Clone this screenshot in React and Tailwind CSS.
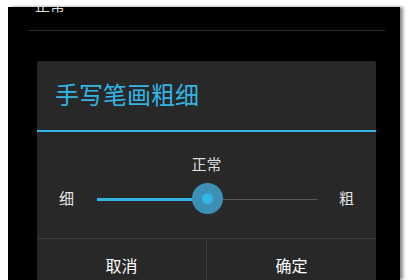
import React from "react";

const font = { fontFamily: '"Roboto", "Noto Sans CJK SC", sans-serif' };

const App = () => {
    return (
        <div className="w-[408px] h-[280px] bg-white overflow-hidden pt-[7px] pl-[8px]" style={font}>
            <div className="w-[392px] h-[273px] bg-black overflow-hidden shadow-[3px_0_3px_rgba(0,0,0,0.45)]">
                {/* list item cut off at the top */}
                <div className="h-[23px] pl-[27px] overflow-hidden">
                    <div className="text-[15px] leading-[15px] -mt-[8px] text-[#d8d8d8]">正常</div>
                </div>
                <div className="ml-[20px] w-[357px] h-px bg-[#2c2c2c]" />

                {/* dialog */}
                <div className="mt-[30px] ml-[29px] w-[339px] h-[230px] bg-[#282828] rounded-t-[2px] flex flex-col">
                    <div className="h-[69px] flex items-center pl-[18px] pt-[1px]">
                        <span className="text-[24px] text-[#33b5e5]">手写笔画粗细</span>
                    </div>
                    <div className="h-[2px] bg-[#33b5e5]" />
                    <div className="h-[106px] flex flex-col">
                        <div className="text-center text-[15px] text-[#dcdcdc] mt-[23px] leading-[20px]">正常</div>
                        <div className="flex items-center h-[32px] mt-[8px]">
                            <span className="w-[60px] pl-[22px] text-[15px] text-[#e6e6e6]">细</span>
                            <div className="relative w-[220px] h-[32px] flex items-center">
                                <div className="w-[110px] h-[3px] bg-[#33b5e5]" />
                                <div className="flex-1 h-px bg-[#5a5a5a]" />
                                <div className="absolute left-[95px] top-0 w-[31px] h-[31px] rounded-full bg-[#3c8fb5] flex items-center justify-center">
                                    <div className="w-[11px] h-[11px] rounded-full bg-[#33b5e5]" />
                                </div>
                            </div>
                            <span className="flex-1 pl-[22px] text-[15px] text-[#e6e6e6]">粗</span>
                        </div>
                    </div>
                    <div className="h-px bg-[#3c3c3c]" />
                    <div className="flex flex-1">
                        <div className="w-[169px] flex justify-center pt-[16px] text-[16px] text-white">取消</div>
                        <div className="w-px bg-[#3c3c3c]" />
                        <div className="flex-1 flex justify-center pt-[16px] text-[16px] text-white">确定</div>
                    </div>
                </div>
            </div>
        </div>
    );
};

export default App;
